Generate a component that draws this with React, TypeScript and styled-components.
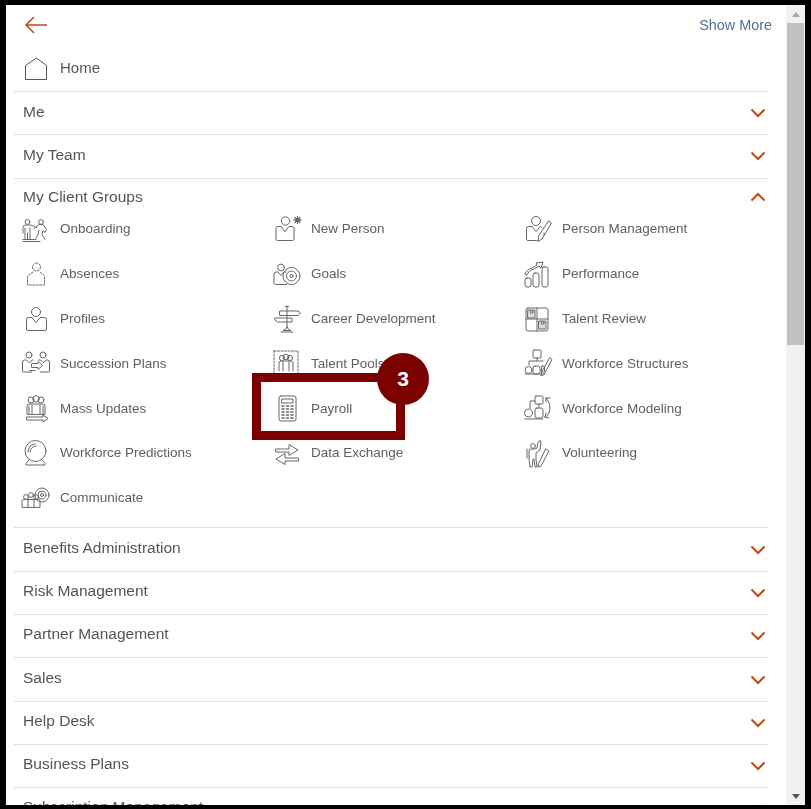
import React from "react";
import styled, { createGlobalStyle } from "styled-components";

const Global = createGlobalStyle`
  html, body { margin: 0; padding: 0; background: #000; }
  body { font-family: "Liberation Sans", Arial, sans-serif; }
`;

const Page = styled.div`
  width: 811px;
  height: 809px;
  box-sizing: border-box;
  padding: 5px 6px 4px 6px;
  background: #000;
  overflow: hidden;
`;
const Frame = styled.div`
  position: relative;
  display: flex;
  width: 799px;
  height: 800px;
  background: #fff;
  overflow: hidden;
`;
const Main = styled.main`
  flex: 1;
  min-width: 0;
  box-sizing: border-box;
  padding: 0 17px 0 8px;
  filter: blur(0.3px);
`;
const TopBar = styled.div`
  display: flex;
  align-items: center;
  justify-content: space-between;
  height: 40px;
  margin-right: -3px;
  padding: 0 0 0 10px;
`;
const ShowMore = styled.a`
  font-size: 14.4px;
  color: #4f7196;
`;
const HomeRow = styled.div`
  display: flex;
  align-items: center;
  gap: 11px;
  height: 47px;
  padding: 0 0 1px 10px;
  box-sizing: border-box;
  border-bottom: 1px solid #e3e3e3;
  font-size: 15px;
  color: #555;
`;
const Section = styled.div`
  display: flex;
  align-items: center;
  justify-content: space-between;
  box-sizing: border-box;
  height: 43.3px;
  padding: 0 3px 0 9px;
  border-bottom: 1px solid #e3e3e3;
  font-size: 15.5px;
  color: #555;
`;
const SectionLabel = styled.span<{ $lift: number }>`
  margin-bottom: ${(p) => p.$lift}px;
`;
const GroupHead = styled.div`
  display: flex;
  align-items: center;
  justify-content: space-between;
  box-sizing: border-box;
  height: 28px;
  padding: 8px 3px 0 9px;
  font-size: 15.5px;
  color: #555;
`;
const Grid = styled.div`
  display: grid;
  grid-template-columns: repeat(3, 251px);
  grid-auto-rows: 44.8px;
  padding: 0 0 7.3px 7px;
  border-bottom: 1px solid #e3e3e3;
`;
const Item = styled.div`
  display: flex;
  align-items: center;
  gap: 9px;
  font-size: 13.5px;
  color: #606060;
`;
const Glyph = styled.svg`
  flex: none;
  width: 30px;
  height: 30px;
  fill: none;
  stroke: #666;
  stroke-width: 1;
  stroke-linejoin: round;
  stroke-linecap: round;
`;
const HomeGlyph = styled.svg`
  flex: none;
  width: 25px;
  height: 24px;
  fill: none;
  stroke: #555;
  stroke-width: 1;
`;
const Arrow = styled.svg`
  width: 24px;
  height: 18px;
  fill: none;
  stroke: #c04a14;
  stroke-width: 1.6;
`;
const Chev = styled.svg`
  width: 16px;
  height: 10px;
  fill: none;
  stroke: #c04a14;
  stroke-width: 2;
`;
const Bar = styled.div`
  flex: none;
  width: 19px;
  display: flex;
  flex-direction: column;
  background: #f1f1f1;
`;
const BarBtn = styled.div`
  flex: none;
  height: 18px;
  display: flex;
  align-items: center;
  justify-content: center;
  padding-left: 1px;
`;
const Tri = styled.div<{ $down?: boolean }>`
  width: 0;
  height: 0;
  border-left: 4.5px solid transparent;
  border-right: 4.5px solid transparent;
  ${(p) =>
    p.$down
      ? "border-top: 5px solid #555;"
      : "border-bottom: 5px solid #a8a8a8;"}
`;
const Thumb = styled.div`
  flex: none;
  height: 322px;
  margin: 0 1px 0 1px;
  background: #c1c1c1;
`;
const Track = styled.div`
  flex: 1;
`;
const Highlight = styled.div`
  position: absolute;
  left: 246px;
  top: 368px;
  width: 153px;
  height: 67px;
  box-sizing: border-box;
  border: 9px solid #7b0000;
`;
const Badge = styled.div`
  position: absolute;
  left: 371px;
  top: 348px;
  width: 52px;
  height: 52px;
  border-radius: 50%;
  background: #7b0000;
  color: #fff;
  font-size: 21px;
  font-weight: 700;
  display: flex;
  align-items: center;
  justify-content: center;
`;

const icons: Record<string, React.ReactNode> = {
  onboarding: (
    <>
      <circle cx="6.5" cy="8" r="2.4" />
      <path d="M2 19v-5.500Q2 11 4.500 11h5l6 2.500M4 14v11M9 14v11M6.500 19v6" />
      <circle cx="20" cy="8" r="2.4" />
      <path d="M13 15l5-4.500h4l3.500 5-1.500 3-2-2-1 4 3 5M18 16l-1 5-2 3" />
      <path d="M2 27.500h17M2 25.500h13" />
    </>
  ),
  absences: (
    <>
      <circle cx="15.500" cy="8" r="4" strokeDasharray="2 1.500" />
      <path d="M12 13l-5 3.500q-.5 0-.5 1V26h17v-8.500q0-1-.5-1L19 13" strokeDasharray="2 1.500" />
    </>
  ),
  profiles: (
    <>
      <circle cx="15" cy="8" r="4.500" />
      <path d="M11 13.500H7.500q-2 0-2 2V25q0 1.500 1.500 1.500h17q1.500 0 1.500-1.500v-9.500q0-2-2-2H19l-4 5z" />
    </>
  ),
  succession: (
    <>
      <circle cx="8" cy="7" r="3" />
      <circle cx="22" cy="7" r="3" />
      <path d="M1.500 14q0-2 2-2h2l3 3 2.500-3h1M1.500 14v9q0 1 1 1h8M17.500 12h2l3 3 2.500-3h1.500q2 0 2 2v9q0 1-1 1h-8" />
      <path d="M11 15.500h6v-2l4.500 4-4.500 4v-2h-6zM9 22.500h5" />
    </>
  ),
  mass: (
    <>
      <circle cx="10" cy="7" r="3" />
      <circle cx="20" cy="7" r="3" />
      <circle cx="15" cy="6" r="3.200" />
      <path d="M6 21v-8q0-2 2-2h14q2 0 2 2v8zM11 21v-9M19 21v-9M8 13v8M22 13v8" />
      <path d="M6 24h16v-2l5 3.500-5 3.500v-2H6z" />
    </>
  ),
  predictions: (
    <>
      <circle cx="14.500" cy="13" r="10.500" />
      <path d="M7 14q0-7 7-8M9 14q0-5 6-6" />
      <path d="M8 22l-3 3.500V27h19v-1.500L21 22" />
    </>
  ),
  communicate: (
    <>
      <circle cx="21" cy="12" r="7" />
      <circle cx="21" cy="12" r="4" />
      <circle cx="21" cy="12" r="1.500" />
      <circle cx="5" cy="14" r="2.400" />
      <circle cx="10" cy="12" r="2.400" />
      <circle cx="15" cy="14" r="2.400" />
      <path d="M1 24v-6q0-1.500 1.500-1.500h15q1.500 0 1.500 1.500v6zM7 24v-7M13 24v-7" />
    </>
  ),
  newPerson: (
    <>
      <circle cx="13.500" cy="7" r="4.200" />
      <path d="M9 12.500H6q-2 0-2 2V25q0 1.500 1.500 1.500h15q1.500 0 1.500-1.500V14.500q0-2-2-2h-3l-4 5z" />
      <path d="M25.500 2.500v7M22 6h7M23 3.500l5 5M28 3.500l-5 5" strokeWidth="1.300" />
    </>
  ),
  goals: (
    <>
      <circle cx="9" cy="8.500" r="3.400" />
      <path d="M5.500 13H4q-2 0-2 2v9q0 1.500 1.500 1.500h11M14 13h-2l-3 3.500-3-3.500" />
      <circle cx="19.500" cy="17" r="8.500" />
      <circle cx="19.500" cy="17" r="5" />
      <circle cx="19.500" cy="17" r="1.600" />
    </>
  ),
  career: (
    <>
      <path d="M15 2v21M13.500 2.500h3" />
      <path d="M8 7h18l2.500 2L26 11.500H8zM3 14h17v4H5.500L3 16z" />
      <path d="M15 23q-1 3-4 3.500h8q-3-.5-4-3.500zM9 28h12" />
    </>
  ),
  pools: (
    <>
      <rect x="2" y="3" width="24" height="24" strokeDasharray="2 1.500" />
      <circle cx="10" cy="10" r="2.600" />
      <circle cx="18" cy="10" r="2.600" />
      <circle cx="14" cy="9" r="2.800" />
      <path d="M7 23v-8q0-2 2-2h10q2 0 2 2v8M11 23v-9M17 23v-9" />
    </>
  ),
  payroll: (
    <>
      <rect x="7" y="3" width="17" height="25" rx="2" />
      <rect x="10" y="6" width="11" height="4" />
      <path
        d="M10 13h2M14.500 13h2M19 13h2M10 16h2M14.500 16h2M19 16h2M10 19h2M14.500 19h2M19 19h2M10 22h2M14.500 22h2M19 22h2M10 25h2M14.500 25h2M19 25h2"
        strokeWidth="1.600"
      />
    </>
  ),
  exchange: (
    <>
      <path d="M4 11h13V6.500L26 12l-9 5.500V14H4z" />
      <path d="M26 20H13v-4.500L4 21l9 5.500V23h13z" />
    </>
  ),
  personMgmt: (
    <>
      <circle cx="13" cy="7" r="4.500" />
      <path d="M9 12.500H5.500q-2 0-2 2V25q0 1.500 1.500 1.500h9M19 14l-1.500-1.500H17l-4 5-4-5M21 19v2" />
      <path d="M26 7l2.500 2L19 25l-4 2.500.5-5z" />
    </>
  ),
  performance: (
    <>
      <rect x="2" y="19" width="6" height="9" rx="2" />
      <rect x="10" y="14" width="6" height="14" rx="2" />
      <rect x="19" y="8" width="6" height="20" rx="2" />
      <path d="M2 15q2-5 7-6l5-3-1-2 7-1-2 6-2-2-5 3q-5 1-7 6z" />
    </>
  ),
  review: (
    <>
      <rect x="3" y="4" width="22" height="23" rx="2" />
      <path d="M14 4v23M3 15h22" />
      <rect x="5" y="6" width="7" height="8" fill="#ddd" />
      <rect x="16" y="17" width="7" height="8" fill="#ddd" />
      <circle cx="8.500" cy="8" r="1.500" />
      <circle cx="19.500" cy="19" r="1.500" />
    </>
  ),
  structures: (
    <>
      <rect x="10" y="2" width="8" height="8" rx="1" />
      <path d="M14 10v3M6 17v-4h14" />
      <circle cx="5.500" cy="22" r="3.500" />
      <rect x="10" y="18" width="7" height="8" rx="2" />
      <rect x="18.500" y="18" width="3" height="6" rx="1" />
      <path d="M2 26h20" />
      <path d="M27 10l2 1.500-8 15-3 1.500.5-3.500z" />
    </>
  ),
  modeling: (
    <>
      <rect x="12" y="3" width="8" height="8" rx="1" />
      <path d="M12 8H7v7M16 11v3" />
      <circle cx="5.500" cy="20" r="4" />
      <rect x="12" y="15" width="8" height="10" rx="2" />
      <path d="M2 26h18" />
      <path d="M23 5q6 6 3 15M23 5l4 0M23 5l0 4M26 20q-1 3-4 4M22 24l4 1M22 24l1-4" />
    </>
  ),
  volunteering: (
    <>
      <circle cx="10" cy="8" r="2.400" />
      <path d="M17 3q1 0 1 1l-1 8-4 3v6l1 8h-2l-1-8h-1l-1 8H7l-1-8V13q0-2 2-2h4l2-1 1-6q0-1 2-1z" />
      <path d="M4 11v9M23 11l3 2-8 15-3 1 .5-3z" />
    </>
  ),
};

const items: [string, string][] = [
  ["Onboarding", "onboarding"],
  ["New Person", "newPerson"],
  ["Person Management", "personMgmt"],
  ["Absences", "absences"],
  ["Goals", "goals"],
  ["Performance", "performance"],
  ["Profiles", "profiles"],
  ["Career Development", "career"],
  ["Talent Review", "review"],
  ["Succession Plans", "succession"],
  ["Talent Pools", "pools"],
  ["Workforce Structures", "structures"],
  ["Mass Updates", "mass"],
  ["Payroll", "payroll"],
  ["Workforce Modeling", "modeling"],
  ["Workforce Predictions", "predictions"],
  ["Data Exchange", "exchange"],
  ["Volunteering", "volunteering"],
  ["Communicate", "communicate"],
];

const upper = ["Me", "My Team"];
const lower = [
  "Benefits Administration",
  "Risk Management",
  "Partner Management",
  "Sales",
  "Help Desk",
  "Business Plans",
  "Subscription Management",
];

const Down = () => (
  <Chev viewBox="0 0 16 10">
    <path d="M1.500 1.500L8 8l6.500-6.500" />
  </Chev>
);
const Up = () => (
  <Chev viewBox="0 0 16 10">
    <path d="M1.500 8.500L8 2l6.500 6.500" />
  </Chev>
);

export default function App() {
  return (
    <Page>
      <Global />
      <Frame>
        <Main>
          <TopBar>
            <Arrow viewBox="0 0 24 18">
              <path d="M23 9H2M10 1L2 9l8 8" />
            </Arrow>
            <ShowMore>Show More</ShowMore>
          </TopBar>
          <HomeRow>
            <HomeGlyph viewBox="0 0 25 24">
              <path d="M1.500 9.500L12.500 2l10 7.500V23.500H1.500z" />
            </HomeGlyph>
            Home
          </HomeRow>
          {upper.map((s) => (
            <Section key={s}>
              <SectionLabel $lift={2}>{s}</SectionLabel>
              <Down />
            </Section>
          ))}
          <GroupHead>My Client Groups<Up /></GroupHead>
          <Grid>
            {items.map(([label, key]) => (
              <Item key={label}>
                <Glyph viewBox="0 0 30 30">{icons[key]}</Glyph>
                {label}
              </Item>
            ))}
          </Grid>
          {lower.map((s) => (
            <Section key={s}>
              <SectionLabel $lift={4}>{s}</SectionLabel>
              <Down />
            </Section>
          ))}
        </Main>
        <Bar>
          <BarBtn><Tri /></BarBtn>
          <Thumb />
          <Track />
          <BarBtn><Tri $down /></BarBtn>
        </Bar>
        <Highlight />
        <Badge>3</Badge>
      </Frame>
    </Page>
  );
}
